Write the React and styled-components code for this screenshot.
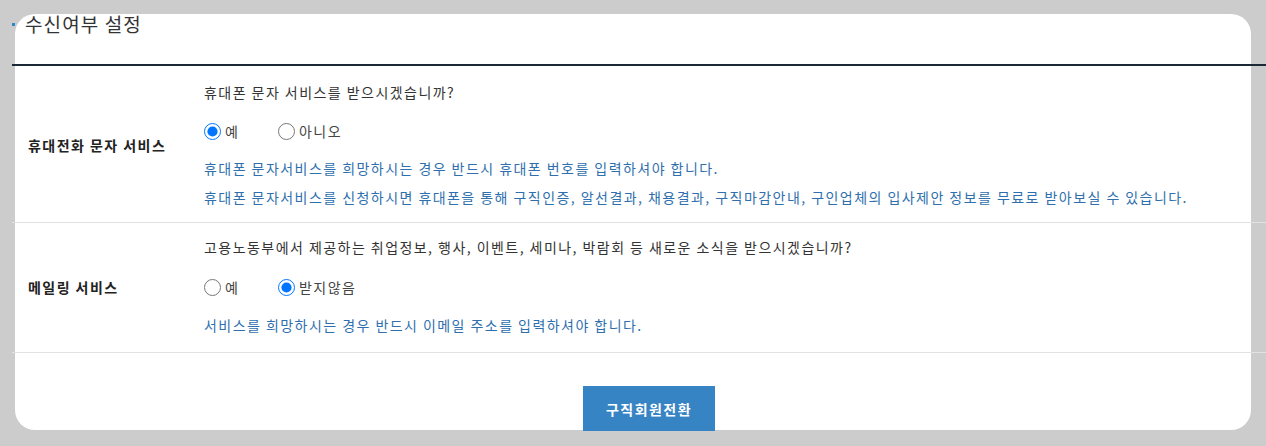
import React from 'react';
import styled, { createGlobalStyle } from 'styled-components';

const GlobalStyle = createGlobalStyle`
  html, body {
    margin: 0;
    padding: 0;
    background: #cccccc;
    font-family: "Noto Sans CJK KR", "Noto Sans", sans-serif;
    color: #333;
  }
`;

const Card = styled.div`
  margin: 15px;
  width: 1236px;
  height: 416px;
  background: #fff;
  border-radius: 20px;
`;

const Section = styled.div`
  margin: -1px -15px 0 -3px;
  letter-spacing: 1.45px;
`;

const TitleBar = styled.div`
  display: flex;
  align-items: center;
  gap: 10px;
  height: 20px;
  padding-bottom: 30px;
  border-bottom: 2px solid #1b2838;
`;

const Bullet = styled.span`
  width: 3px;
  height: 3px;
  margin-top: 1px;
  background: #2a8ac8;
`;

const Title = styled.h2`
  margin: 0;
  font-size: 19px;
  font-weight: 400;
  line-height: 20px;
  letter-spacing: 1.1px;
  color: #333;
`;

const Row = styled.div`
  display: flex;
  align-items: center;
  border-bottom: 1px solid #e2e2e2;
  padding: ${p => p.$pt}px 0 ${p => p.$pb}px;
`;

const Label = styled.div`
  width: 192px;
  padding-left: 16px;
  box-sizing: border-box;
  font-size: 14px;
  font-weight: 700;
  color: #222;
`;

const Body = styled.div`
  display: flex;
  flex-direction: column;
  font-size: 14px;
`;

const Question = styled.div`
  line-height: 28px;
  color: #333;
`;

const Options = styled.div`
  display: flex;
  align-items: center;
  height: 28px;
  margin-top: ${p => p.$mt}px;
`;

const Option = styled.label`
  display: flex;
  align-items: center;
  gap: 4px;
  width: ${p => p.$w}px;
  color: #444;
`;

const Radio = styled.input`
  width: 17px;
  height: 17px;
  margin: 0;
`;

const Notes = styled.div`
  margin-top: ${p => p.$mt}px;
  line-height: 29px;
  color: #2f6fad;
`;

const Actions = styled.div`
  display: flex;
  justify-content: center;
  padding: 33px 0 0 20px;
`;

const Button = styled.button`
  width: 132px;
  height: 45px;
  border: none;
  background: #3784c4;
  color: #fff;
  font-family: inherit;
  font-size: 14px;
  font-weight: 700;
  letter-spacing: 1.45px;
`;

export default function App() {
  return (
    <>
      <GlobalStyle />
      <Card>
        <Section>
          <TitleBar>
            <Bullet />
            <Title>수신여부 설정</Title>
          </TitleBar>
          <Row $pt={12} $pb={10}>
            <Label>휴대전화 문자 서비스</Label>
            <Body>
              <Question>휴대폰 문자 서비스를 받으시겠습니까?</Question>
              <Options $mt={11}>
                <Option $w={74}>
                  <Radio type="radio" name="sms" defaultChecked />예
                </Option>
                <Option>
                  <Radio type="radio" name="sms" />아니오
                </Option>
              </Options>
              <Notes $mt={9}>
                휴대폰 문자서비스를 희망하시는 경우 반드시 휴대폰 번호를 입력하셔야 합니다.<br />
                휴대폰 문자서비스를 신청하시면 휴대폰을 통해 구직인증, 알선결과, 채용결과, 구직마감안내, 구인업체의 입사제안 정보를 무료로 받아보실 수 있습니다.
              </Notes>
            </Body>
          </Row>
          <Row $pt={10} $pb={12}>
            <Label>메일링 서비스</Label>
            <Body>
              <Question>고용노동부에서 제공하는 취업정보, 행사, 이벤트, 세미나, 박람회 등 새로운 소식을 받으시겠습니까?</Question>
              <Options $mt={12}>
                <Option $w={74}>
                  <Radio type="radio" name="mail" />예
                </Option>
                <Option>
                  <Radio type="radio" name="mail" defaultChecked />받지않음
                </Option>
              </Options>
              <Notes $mt={10}>서비스를 희망하시는 경우 반드시 이메일 주소를 입력하셔야 합니다.</Notes>
            </Body>
          </Row>
          <Actions>
            <Button>구직회원전환</Button>
          </Actions>
        </Section>
      </Card>
    </>
  );
}
